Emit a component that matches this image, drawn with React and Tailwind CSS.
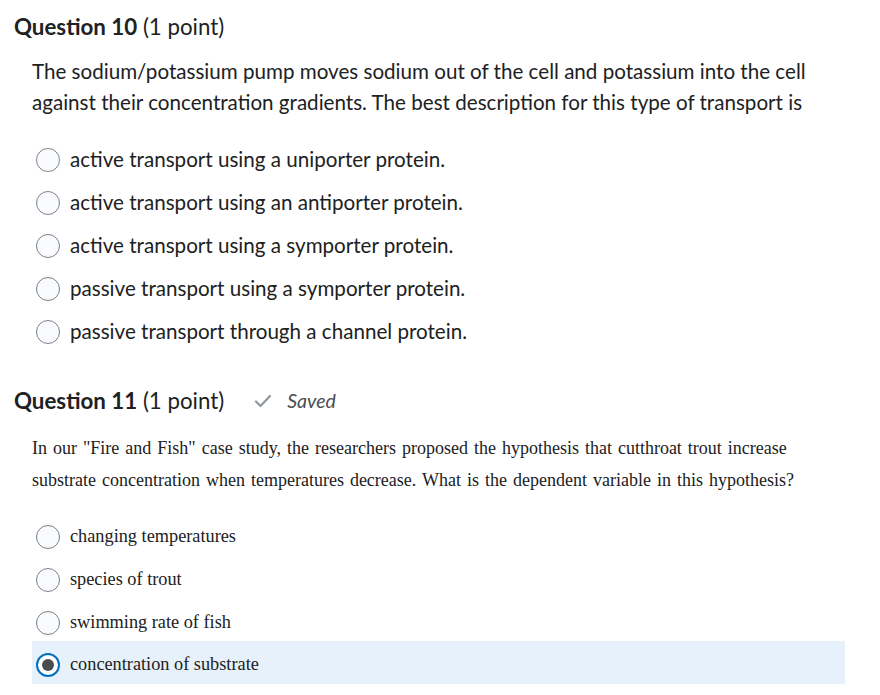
import React from "react";

const lato = { fontFamily: "Lato, 'Open Sans', sans-serif" };
const serif = { fontFamily: "'Liberation Serif', 'Times New Roman', serif" };

function Radio({ checked }) {
  if (checked) {
    return (
      <span className="flex h-[24px] w-[24px] shrink-0 items-center justify-center rounded-full border-[2.5px] border-[#006fbf] bg-white">
        <span className="h-[12px] w-[12px] rounded-full bg-[#494c4e]" />
      </span>
    );
  }
  return (
    <span className="h-[24px] w-[24px] shrink-0 rounded-full border border-[#7c8185] bg-[#f9fbff]" />
  );
}

function Option({ text, checked, font, size }) {
  return (
    <div
      className={`flex h-[43px] items-center gap-[10px] pl-[4px] ${checked ? "mt-[-3px] bg-[#e7f1fb] pt-[4px]" : ""}`}
    >
      <Radio checked={checked} />
      <span className={`${size} text-[#202122]`} style={font}>{text}</span>
    </div>
  );
}

export default function App() {
  const q10 = [
    "active transport using a uniporter protein.",
    "active transport using an antiporter protein.",
    "active transport using a symporter protein.",
    "passive transport using a symporter protein.",
    "passive transport through a channel protein.",
  ];
  const q11 = [
    "changing temperatures",
    "species of trout",
    "swimming rate of fish",
    "concentration of substrate",
  ];
  return (
    <div className="h-[695px] w-[880px] overflow-hidden bg-white text-[#202122]" style={lato}>
      <div className="pl-[14px] pt-[12px]">
        <h2 className="text-[22.3px] leading-[30px] text-[#202122]">
          <span className="font-bold">Question 10</span>{" "}
          <span className="font-normal">(1 point)</span>
        </h2>
      </div>
      <div className="pl-[32px] pr-[35px] pt-[14px]">
        <p className="text-[20.6px] leading-[31px]">
          The sodium/potassium pump moves sodium out of the cell and potassium into the cell against their concentration gradients. The best description for this type of transport is
        </p>
        <div className="mt-[20px] flex flex-col">
          {q10.map((t) => (
            <Option key={t} text={t} font={lato} size="text-[20.6px]" />
          ))}
        </div>
      </div>

      <div className="flex items-center pl-[14px] pt-[33px]">
        <h2 className="text-[22.3px] leading-[30px]">
          <span className="font-bold">Question 11</span>{" "}
          <span className="font-normal">(1 point)</span>
        </h2>
        <div className="ml-[30px] flex items-center gap-[15px]">
          <svg width="18" height="14" viewBox="0 0 18 14" fill="none">
            <path d="M2 7.5 L6.5 12 L16 2" stroke="#90989d" strokeWidth="2.2" strokeLinecap="round" strokeLinejoin="round" />
          </svg>
          <span className="text-[19.5px] italic text-[#494c4e]">Saved</span>
        </div>
      </div>
      <div className="pl-[32px] pr-[35px] pt-[16px]">
        <p className="text-[18px] leading-[32px] [word-spacing:1.5px]" style={serif}>
          In our "Fire and Fish" case study, the researchers proposed the hypothesis that cutthroat trout increase substrate concentration when temperatures decrease. What is the dependent variable in this hypothesis?
        </p>
        <div className="mt-[19px] flex flex-col">
          {q11.map((t, i) => (
            <Option key={t} text={t} font={serif} size="text-[18.3px]" checked={i === 3} />
          ))}
        </div>
      </div>
    </div>
  );
}
